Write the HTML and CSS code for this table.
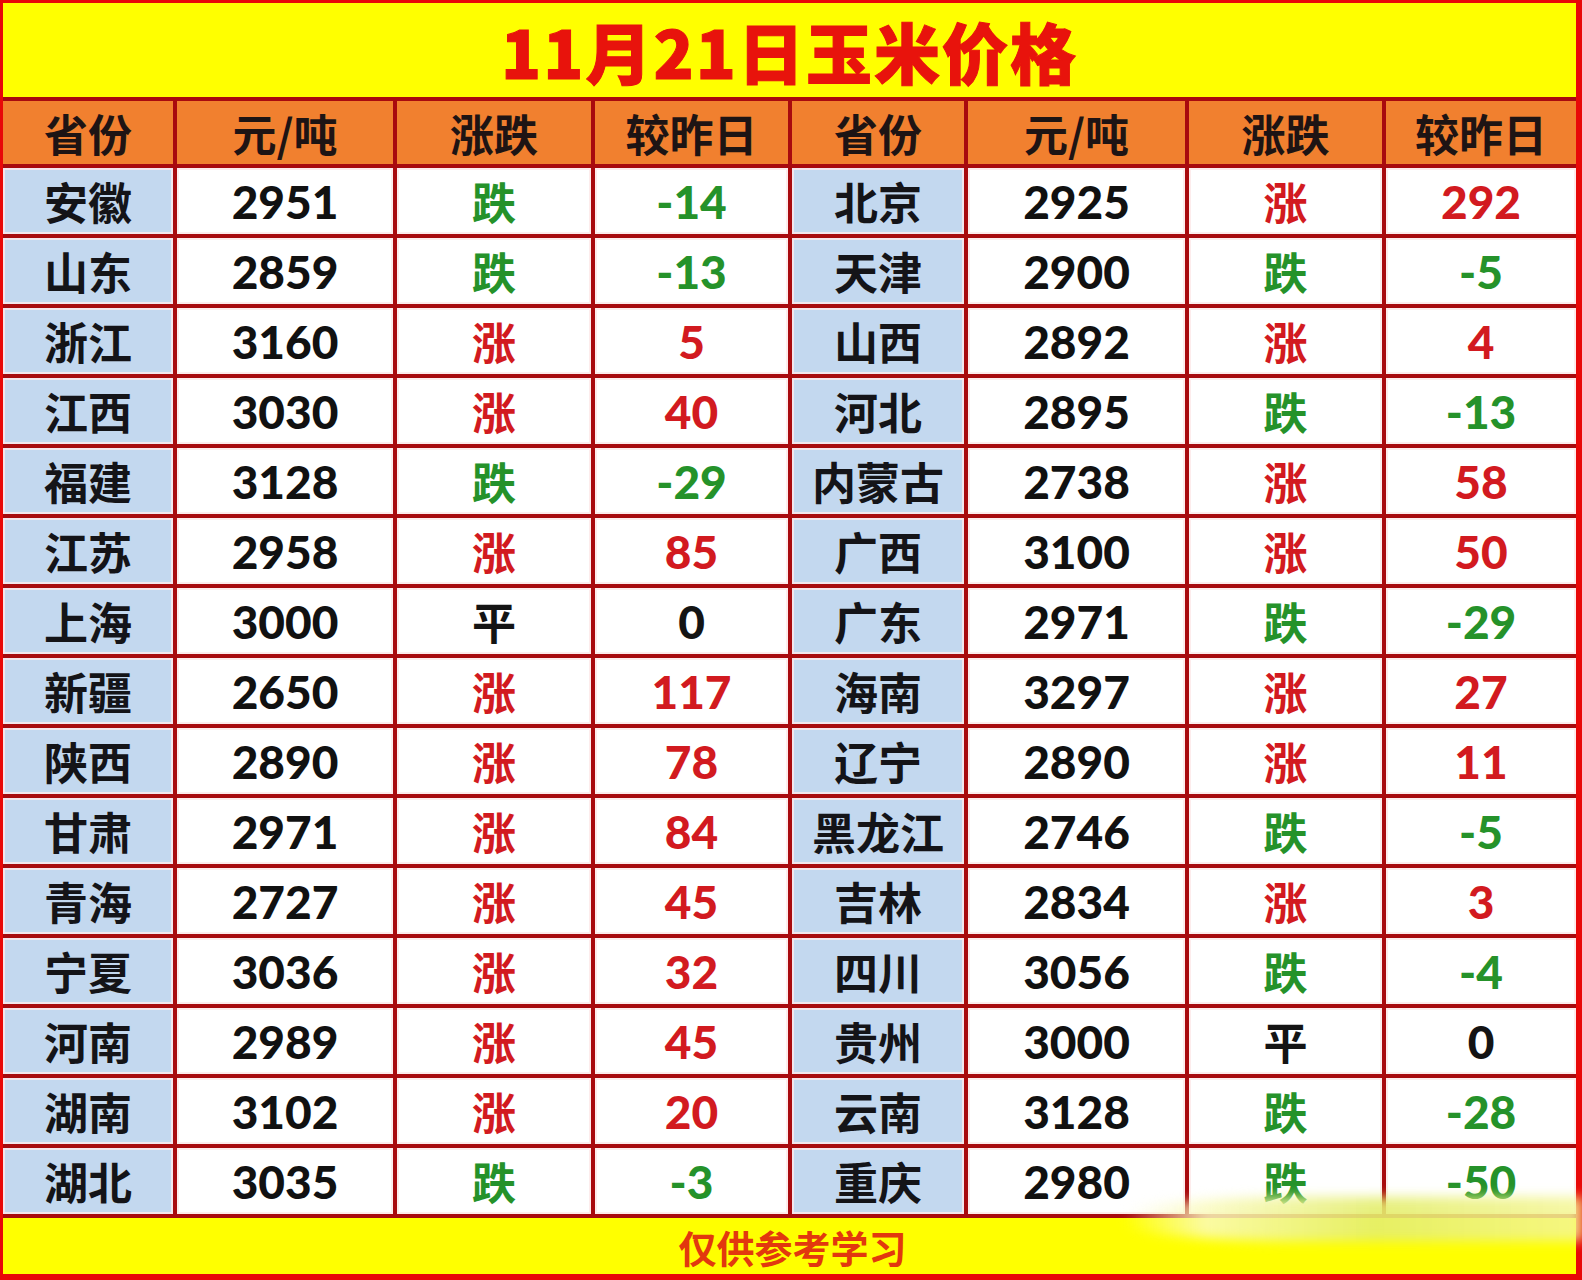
FILE: index.html
```html
<!DOCTYPE html>
<html lang="zh-CN">
<head>
<meta charset="utf-8">
<title>11月21日玉米价格</title>
<link rel="stylesheet" href="styles.css">
</head>
<body>
<div class="sheet">
  <div class="title">11月21日玉米价格</div>

  <div class="hd">省份</div><div class="hd">元/吨</div><div class="hd">涨跌</div><div class="hd">较昨日</div>
  <div class="hd">省份</div><div class="hd">元/吨</div><div class="hd">涨跌</div><div class="hd">较昨日</div>

  <div class="prov">安徽</div><div class="num">2951</div><div class="dir down">跌</div><div class="num down">-14</div>
  <div class="prov">北京</div><div class="num">2925</div><div class="dir up">涨</div><div class="num up">292</div>

  <div class="prov">山东</div><div class="num">2859</div><div class="dir down">跌</div><div class="num down">-13</div>
  <div class="prov">天津</div><div class="num">2900</div><div class="dir down">跌</div><div class="num down">-5</div>

  <div class="prov">浙江</div><div class="num">3160</div><div class="dir up">涨</div><div class="num up">5</div>
  <div class="prov">山西</div><div class="num">2892</div><div class="dir up">涨</div><div class="num up">4</div>

  <div class="prov">江西</div><div class="num">3030</div><div class="dir up">涨</div><div class="num up">40</div>
  <div class="prov">河北</div><div class="num">2895</div><div class="dir down">跌</div><div class="num down">-13</div>

  <div class="prov">福建</div><div class="num">3128</div><div class="dir down">跌</div><div class="num down">-29</div>
  <div class="prov">内蒙古</div><div class="num">2738</div><div class="dir up">涨</div><div class="num up">58</div>

  <div class="prov">江苏</div><div class="num">2958</div><div class="dir up">涨</div><div class="num up">85</div>
  <div class="prov">广西</div><div class="num">3100</div><div class="dir up">涨</div><div class="num up">50</div>

  <div class="prov">上海</div><div class="num">3000</div><div class="dir flat">平</div><div class="num flat">0</div>
  <div class="prov">广东</div><div class="num">2971</div><div class="dir down">跌</div><div class="num down">-29</div>

  <div class="prov">新疆</div><div class="num">2650</div><div class="dir up">涨</div><div class="num up">117</div>
  <div class="prov">海南</div><div class="num">3297</div><div class="dir up">涨</div><div class="num up">27</div>

  <div class="prov">陕西</div><div class="num">2890</div><div class="dir up">涨</div><div class="num up">78</div>
  <div class="prov">辽宁</div><div class="num">2890</div><div class="dir up">涨</div><div class="num up">11</div>

  <div class="prov">甘肃</div><div class="num">2971</div><div class="dir up">涨</div><div class="num up">84</div>
  <div class="prov">黑龙江</div><div class="num">2746</div><div class="dir down">跌</div><div class="num down">-5</div>

  <div class="prov">青海</div><div class="num">2727</div><div class="dir up">涨</div><div class="num up">45</div>
  <div class="prov">吉林</div><div class="num">2834</div><div class="dir up">涨</div><div class="num up">3</div>

  <div class="prov">宁夏</div><div class="num">3036</div><div class="dir up">涨</div><div class="num up">32</div>
  <div class="prov">四川</div><div class="num">3056</div><div class="dir down">跌</div><div class="num down">-4</div>

  <div class="prov">河南</div><div class="num">2989</div><div class="dir up">涨</div><div class="num up">45</div>
  <div class="prov">贵州</div><div class="num">3000</div><div class="dir flat">平</div><div class="num flat">0</div>

  <div class="prov">湖南</div><div class="num">3102</div><div class="dir up">涨</div><div class="num up">20</div>
  <div class="prov">云南</div><div class="num">3128</div><div class="dir down">跌</div><div class="num down">-28</div>

  <div class="prov">湖北</div><div class="num">3035</div><div class="dir down">跌</div><div class="num down">-3</div>
  <div class="prov">重庆</div><div class="num">2980</div><div class="dir down">跌</div><div class="num down">-50</div>

  <div class="foot">仅供参考学习</div>
  <div class="smudge"></div>
</div>
</body>
</html>
```

FILE: styles.css
```css
html, body {
  margin: 0;
  padding: 0;
  background: #ffffff;
}

.sheet {
  position: relative;
  box-sizing: border-box;
  width: 1582px;
  height: 1280px;
  border-style: solid;
  border-color: #e80808;
  border-width: 3px 6px 6px 3px;
  background: #a80a0e;
  display: grid;
  grid-template-columns: 170px 216px 194px 193px 172px 217px 193px 1fr;
  grid-template-rows: 94px 63px repeat(15, 66px) 1fr;
  gap: 4px;
  font-family: "Noto Sans CJK SC", "Noto Sans", sans-serif;
  font-weight: 700;
}

.sheet > div {
  display: flex;
  align-items: center;
  justify-content: center;
  white-space: nowrap;
}

.title {
  grid-column: 1 / -1;
  background: #ffff00;
  color: #e8130c;
  font-size: 66px;
  font-weight: 900;
  letter-spacing: 2px;
  -webkit-text-stroke: 1px #e8130c;
}

.hd {
  background: #f1802f;
  color: #1e1414;
  font-size: 44px;
}

.prov {
  background: #c3d8ef;
  box-shadow: inset 0 0 0 2px #f3e5ec;
  color: #141418;
  font-size: 44px;
}

.num, .dir {
  background: #ffffff;
  box-shadow: inset 0 0 0 2px #fdecec;
  color: #111111;
}

.num {
  font-family: Lato, "Noto Sans", sans-serif;
  font-weight: 900;
  font-size: 46px;
}

.dir {
  font-size: 44px;
}

.up { color: #d21a20; }
.down { color: #25922a; }
.flat { color: #141414; }

.foot {
  grid-column: 1 / -1;
  background: #ffff00;
  color: #e2380e;
  font-size: 38px;
  padding-left: 6px;
}

.smudge {
  position: absolute;
  left: 1120px;
  top: 1194px;
  width: 460px;
  height: 44px;
  border-radius: 40% 0 0 40%;
  background: linear-gradient(to right, rgba(255,255,230,0) 0%, rgba(250,250,190,0.85) 18%, rgba(228,238,110,0.9) 55%, rgba(245,246,150,0.85) 100%);
  filter: blur(6px);
  pointer-events: none;
}
```
